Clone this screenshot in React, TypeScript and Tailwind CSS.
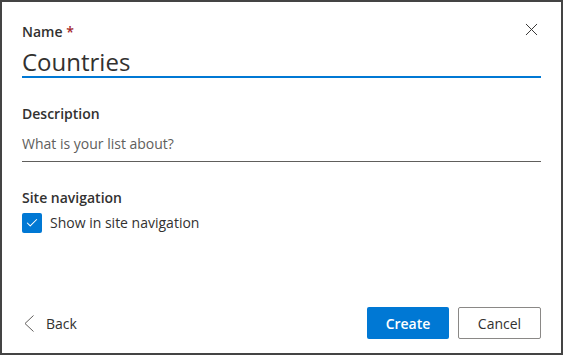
import { Check, X } from 'lucide-react';

const font = { fontFamily: '"Segoe UI", "Open Sans", sans-serif' };

export default function App() {
  return (
    <div className="w-[563px] h-[355px] bg-white border-2 border-[#444] flex flex-col text-[#323130]" style={font}>
      <div className="flex-1 px-[20px] pt-[20px] relative">
        <button className="absolute right-[19px] top-[17px] text-[#323130]">
          <X size={21} strokeWidth={1.1} />
        </button>

        {/* Name */}
        <div>
          <label className="block text-[14px] font-semibold leading-[20px]">
            Name <span className="text-[#a4262c]">*</span>
          </label>
          <div className="mt-[5px] h-[31px] border-b-2 border-[#0078d4] text-[24px] leading-[30px] font-normal">
            Countries
          </div>
        </div>

        {/* Description */}
        <div className="mt-[26px]">
          <label className="block text-[14px] font-semibold leading-[20px]">Description</label>
          <div className="mt-[10px] h-[28px] border-b border-[#605e5c] text-[14px] leading-[20px] text-[#605e5c]">
            What is your list about?
          </div>
        </div>

        {/* Site navigation */}
        <div className="mt-[26px]">
          <label className="block text-[14px] font-semibold leading-[20px]">Site navigation</label>
          <div className="mt-[5px] flex items-center gap-[8px]">
            <span className="w-[20px] h-[20px] rounded-[2px] bg-[#0078d4] flex items-center justify-center text-white">
              <Check size={14} strokeWidth={1.8} />
            </span>
            <span className="text-[14px] leading-[20px]">Show in site navigation</span>
          </div>
        </div>
      </div>

      {/* Footer */}
      <div className="px-[20px] pb-[14px] flex items-end justify-between">
        <button className="h-[32px] flex items-center gap-[12px] text-[14px] text-[#323130] pl-[2px]">
          <svg width="10" height="17" viewBox="0 0 10 17" fill="none" stroke="#605e5c" strokeWidth="1">
            <polyline points="9.5,0.5 1,8.5 9.5,16.5" />
          </svg>
          Back
        </button>
        <div className="flex gap-[9px]">
          <button className="w-[82px] h-[32px] rounded-[2px] bg-[#0078d4] text-white text-[14px] font-semibold">
            Create
          </button>
          <button className="w-[83px] h-[32px] rounded-[2px] border border-[#8a8886] bg-white text-[14px] font-normal">
            Cancel
          </button>
        </div>
      </div>
    </div>
  );
}
